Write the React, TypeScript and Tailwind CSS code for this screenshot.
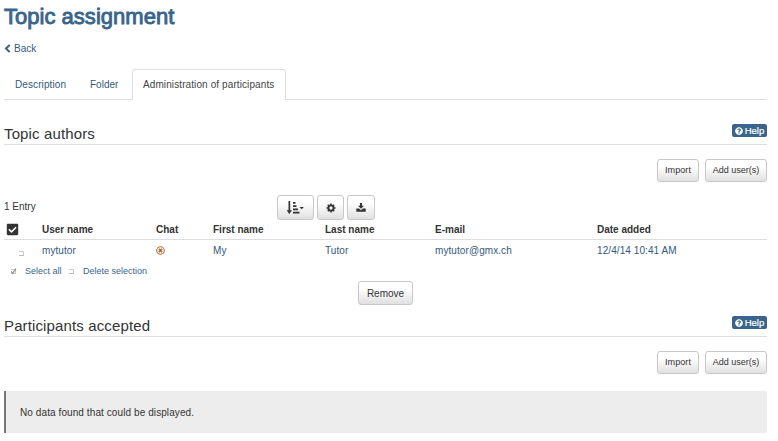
import { FaQuestionCircle, FaCheckSquare } from 'react-icons/fa';
import type { ReactNode } from 'react';

const BTN =
  'flex items-center justify-center whitespace-nowrap rounded-[3px] border border-[#c8c8c8] bg-linear-to-b from-white from-30% to-[#e0e0e0] text-[#333]';

function Section({ title, className }: { title: string; className: string }) {
  return (
    <>
      <div className={`flex h-[20px] justify-between border-b border-[#ddd] ${className}`}>
        <h2 className="text-[15px] leading-[18px] tracking-[0.13px] whitespace-nowrap text-[#333]">{title}</h2>
        <span className="-mt-px flex h-[13px] w-[35px] items-center justify-center gap-[2px] rounded-[2px] bg-[#39658b] text-[9.5px] leading-[13px] text-white [-webkit-text-stroke:0.2px_white]">
          <FaQuestionCircle size={8} />
          Help
        </span>
      </div>
      <div className="mt-[14px] flex h-[23px] justify-end gap-[6px]">
        <button className={`${BTN} w-[42px] text-[9px] tracking-[0.1px]`}>Import</button>
        <button className={`${BTN} w-[62px] text-[9px]`}>Add user(s)</button>
      </div>
    </>
  );
}

function BackIcon() {
  return (
    <svg width="7" height="9" viewBox="0 0 7 9" fill="none" stroke="#39658b" strokeWidth="2">
      <path d="M5.6 1L2 4.5 5.6 8" />
    </svg>
  );
}

function SortIcon() {
  return (
    <svg width="20" height="15" viewBox="0 0 20 15" fill="#333">
      <path d="M2.5 1h1.7v9.3H6L3.3 14 .6 10.3h1.9zM7 2h2.5v1.8H7zM7 5.2h3.5v1.8H7zM7 8.5h5v1.8H7zM7 11.8h6.5v1.8H7zM13.5 7h4.4l-2.2 2.2z" />
    </svg>
  );
}

function CogIcon() {
  return (
    <svg width="10" height="10" viewBox="0 0 10 10" fill="none" stroke="#333">
      <circle cx="5" cy="5" r="2.6" strokeWidth="1.9" />
      <path d="M5 .5v1.4M5 8.1v1.4M.5 5h1.4M8.1 5h1.4M1.8 1.8l1 1M7.2 7.2l1 1M8.2 1.8l-1 1M2.8 7.2l-1 1" strokeWidth="1.6" />
    </svg>
  );
}

function DownloadIcon() {
  return (
    <svg width="10" height="9" viewBox="0 0 10 9" fill="#333">
      <path d="M4 0h2v2.8h2L5 5.8 2 2.8h2zM.3 5.6h2.8L5 7.3l1.9-1.7h2.8v3.1H.3z" />
    </svg>
  );
}

function ChatIcon() {
  return (
    <svg width="9" height="9" viewBox="0 0 9 9" fill="none" stroke="#b07040">
      <circle cx="4.5" cy="4.5" r="3.8" strokeWidth="1.1" />
      <path d="M3 3l3 3M6 3L3 6" strokeWidth="1.8" />
    </svg>
  );
}

function SmallBox({ checked }: { checked?: boolean }) {
  return (
    <svg width="7" height="7" viewBox="0 0 7 7" fill="none" className="shrink-0">
      <path d="M1 1.5h4.5v4.5" stroke="#ccc" strokeWidth="1" />
      <path d="M1 5.5h4.5" stroke="#bbb" strokeWidth="1" />
      {checked && <path d="M1.2 3.5l1.4 1.8L6 .7" stroke="#888" strokeWidth="1.1" />}
    </svg>
  );
}

const Cell = ({ children }: { children?: ReactNode }) => <div className="whitespace-nowrap">{children}</div>;
const COLS = 'grid grid-cols-[38px_114px_57px_112px_110px_162px_170px]';

export default function App() {
  return (
    <div className="h-[441px] w-[778px] overflow-hidden bg-white pr-[11px] pl-1 font-['Liberation_Sans',Arial,sans-serif] text-[10px] text-[#333]">
      <h1 className="pt-[4px] text-[22px] leading-[26px] font-normal tracking-[0.02px] whitespace-nowrap text-[#39658b] [-webkit-text-stroke:0.9px_#39658b]">Topic assignment</h1>
      <a className="mt-[12px] flex h-[13px] items-center gap-[3px] text-[#33597c]">
        <BackIcon />
        Back
      </a>
      <nav className="mt-[14px] flex h-[31px] border-b border-[#ddd] leading-[31px] whitespace-nowrap text-[#33597c]">
        <a className="w-[75px] pl-[11px] tracking-[0.1px]">Description</a>
        <a className="w-[53px] pl-[11px]">Folder</a>
        <a className="h-[31px] w-[154px] rounded-t-[3px] border border-b-0 border-[#ddd] bg-white pl-[10px] leading-[29px] tracking-[0.1px] text-[#444]">Administration of participants</a>
      </nav>

      <Section title="Topic authors" className="mt-[25px]" />

      <div className="mt-[13px] flex h-[25px]">
        <span className="w-[273px] leading-[23px]">1 Entry</span>
        <div className="flex gap-[3px]">
          <button className={`${BTN} w-[37px]`}><SortIcon /></button>
          <button className={`${BTN} w-[27px]`}><CogIcon /></button>
          <button className={`${BTN} w-[28px]`}><DownloadIcon /></button>
        </div>
      </div>
      <div className={`${COLS} h-[20px] border-b border-[#ddd] leading-[19px] font-bold`}>
        <Cell><FaCheckSquare size={13} className="mt-[3px] ml-[2px]" /></Cell>
        <Cell>User name</Cell>
        <Cell>Chat</Cell>
        <Cell>First name</Cell>
        <Cell>Last name</Cell>
        <Cell>E-mail</Cell>
        <Cell>Date added</Cell>
      </div>
      <div className={`${COLS} h-[25px] leading-[21px] tracking-[0.08px] text-[#33597c]`}>
        <Cell><span className="block pt-[10px] pl-[14px]"><SmallBox /></span></Cell>
        <Cell>mytutor</Cell>
        <Cell><span className="block pt-[6px]"><ChatIcon /></span></Cell>
        <Cell>My</Cell>
        <Cell>Tutor</Cell>
        <Cell>mytutor@gmx.ch</Cell>
        <Cell>12/4/14 10:41 AM</Cell>
      </div>
      <div className="flex h-[13px] items-center pl-[6px] text-[9px] whitespace-nowrap text-[#39658b]">
        <SmallBox checked />
        <a className="ml-[8px] w-[43px]">Select all</a>
        <SmallBox />
        <a className="ml-[8px]">Delete selection</a>
      </div>
      <div className="mt-[3px] flex h-[24px] pl-[354px]">
        <button className={`${BTN} w-[55px]`}>Remove</button>
      </div>

      <Section title="Participants accepted" className="mt-[12px]" />

      <div className="mt-[17px] h-[42px] border-l-2 border-[#777] bg-[#ededed] pl-[14px] leading-[43px] tracking-[0.09px]">No data found that could be displayed.</div>
    </div>
  );
}
